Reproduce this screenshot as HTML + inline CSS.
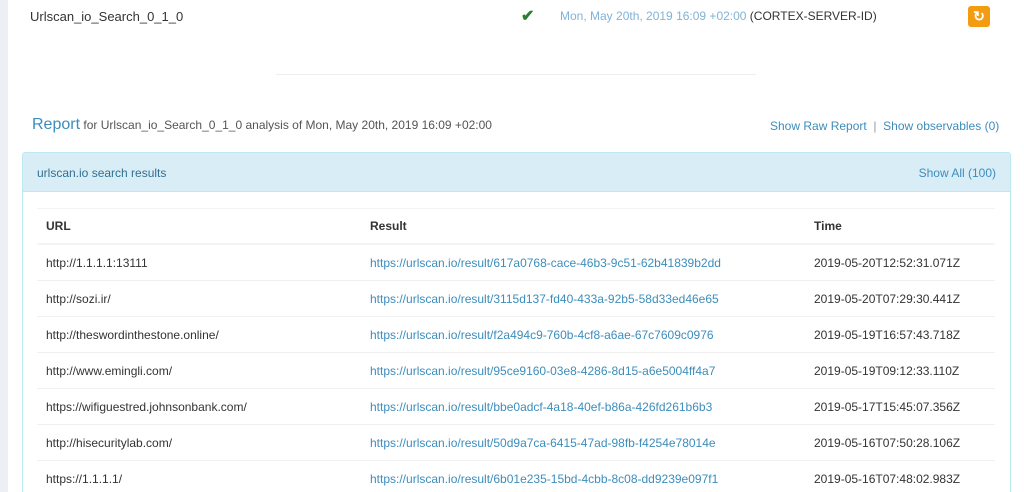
<!DOCTYPE html>
<html style="overflow:hidden;height:492px"><head><style>
body{margin:0;width:1024px;height:492px;overflow:hidden;position:relative;background:#ecf0f5;font-family:"Liberation Sans",sans-serif;font-size:12px;color:#333}
.main{position:absolute;left:8px;top:0;width:1016px;height:492px;background:#fff}
.a{position:absolute;white-space:nowrap}
.blue{color:#3c8dbc}
.panel{position:absolute;left:22px;top:152px;width:987px;height:360px;border:1px solid #bce8f1;border-radius:3px;background:#fff;overflow:hidden}
.ph{height:38px;background:#d9edf7;border-bottom:1px solid #bce8f1;position:relative}
table{position:absolute;left:14px;top:55px;width:958px;border-collapse:collapse}
td,th{height:35px;padding:0 9px;text-align:left;border-top:1px solid #f0f0f0;font-size:12px;white-space:nowrap}
th{height:34px;font-weight:bold;border-top:1px solid #f4f4f4;border-bottom:2px solid #f4f4f4}
td a{color:#3c8dbc;text-decoration:none}
</style></head><body>
<div class="main"></div>
<div class="a" style="left:30px;top:9px;font-size:13px">Urlscan_io_Search_0_1_0</div>
<div class="a" style="left:521px;top:6px;color:#2e7d32;font-size:16px;font-weight:bold">✔</div>
<div class="a" style="left:560px;top:9px"><span style="color:#7fb3d5">Mon, May 20th, 2019 16:09 +02:00</span> (CORTEX-SERVER-ID)</div>
<div class="a" style="left:968px;top:6px;width:22px;height:21px;background:#f39c12;border-radius:3px;color:#fff;font-weight:bold;text-align:center;line-height:21px;font-size:14px">↻</div>
<div class="a" style="left:276px;top:74px;width:480px;height:1px;background:#eee"></div>
<div class="a" style="left:32px;top:116px"><span class="blue" style="font-size:16px">Report</span> <span style="color:#555">for Urlscan_io_Search_0_1_0 analysis of Mon, May 20th, 2019 16:09 +02:00</span></div>
<div class="a blue" style="left:770px;top:119px">Show Raw Report <span style="color:#999">&nbsp;|&nbsp;</span> Show observables (0)</div>
<div class="panel">
<div class="ph"><span class="a" style="left:14px;top:13px;color:#31708f">urlscan.io search results</span><span class="a blue" style="right:14px;top:13px">Show All (100)</span></div>
<table>
<tr><th style="width:306px">URL</th><th style="width:426px">Result</th><th>Time</th></tr>
<tr><td>http://1.1.1.1:13111</td><td><a>https://urlscan.io/result/617a0768-cace-46b3-9c51-62b41839b2dd</a></td><td>2019-05-20T12:52:31.071Z</td></tr>
<tr><td>http://sozi.ir/</td><td><a>https://urlscan.io/result/3115d137-fd40-433a-92b5-58d33ed46e65</a></td><td>2019-05-20T07:29:30.441Z</td></tr>
<tr><td>http://theswordinthestone.online/</td><td><a>https://urlscan.io/result/f2a494c9-760b-4cf8-a6ae-67c7609c0976</a></td><td>2019-05-19T16:57:43.718Z</td></tr>
<tr><td>http://www.emingli.com/</td><td><a>https://urlscan.io/result/95ce9160-03e8-4286-8d15-a6e5004ff4a7</a></td><td>2019-05-19T09:12:33.110Z</td></tr>
<tr><td>https://wifiguestred.johnsonbank.com/</td><td><a>https://urlscan.io/result/bbe0adcf-4a18-40ef-b86a-426fd261b6b3</a></td><td>2019-05-17T15:45:07.356Z</td></tr>
<tr><td>http://hisecuritylab.com/</td><td><a>https://urlscan.io/result/50d9a7ca-6415-47ad-98fb-f4254e78014e</a></td><td>2019-05-16T07:50:28.106Z</td></tr>
<tr><td>https://1.1.1.1/</td><td><a>https://urlscan.io/result/6b01e235-15bd-4cbb-8c08-dd9239e097f1</a></td><td>2019-05-16T07:48:02.983Z</td></tr>
</table>
</div>
</body></html>
